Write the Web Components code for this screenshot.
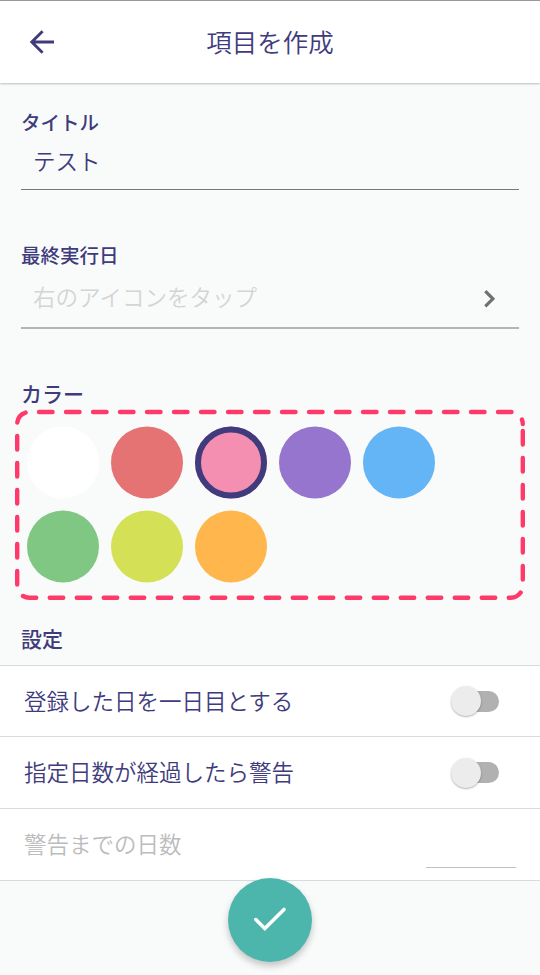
<!DOCTYPE html>
<html lang="ja">
<head>
<meta charset="utf-8">
<title>項目を作成</title>
<style>
    :root {
        --primary-color: #403b7c;
        --background-color: #f9fbfa;
        --surface-color: #ffffff;
        --divider-color: #d8dadb;
        --accent-color: #4db6ac;
        --frame-color: #ff3a6a;
    }

    body {
        margin: 0;
        background-color: var( --background-color );
        color: var( --primary-color );
        font-family: "Noto Sans CJK JP", sans-serif;
        font-weight: 350;
        overflow: hidden;
    }
</style>
</head>
<body>
<item-form-page></item-form-page>

<script>
function define( name, html ) {
    const template = document.createElement('template');
    template.innerHTML = html;

    window.customElements.define( name, class extends HTMLElement {
        constructor(){
            super();

            this.attachShadow( { mode:"open" } );
            this.shadowRoot.appendChild( template.content.cloneNode( true ) );
        }
    } );
}

define( 'app-header', `
    <style>
        :host {
            display: grid;
            grid-template-columns: 84px 1fr 84px;
            align-items: center;
            box-sizing: border-box;
            height: 83px;
            border-top: 1px solid #999999;
            background-color: var( --surface-color );
            box-shadow: 0 1px 2px rgba(0, 0, 0, .25);
        }

        svg {
            display: block;
            justify-self: center;
        }

        .title {
            padding-bottom: 2px;
            text-align: center;
            font-size: 25.5px;
            line-height: 36px;
        }
    </style>
    <svg width="28" height="28" viewBox="0 0 28 28" fill="none" stroke="currentColor" stroke-width="2.9">
        <path d="M26 14H3.5M14.6 3.2L3.8 14l10.8 10.8"/>
    </svg>
    <div class="title"><slot></slot></div>
` );

define( 'section-label', `
    <style>
        :host {
            display: block;
            height: 30px;
            line-height: var( --label-line, 30px );
            font-size: var( --label-size, 19.5px );
            font-weight: 500;
        }
    </style>
    <slot></slot>
` );

define( 'form-field', `
    <style>
        :host {
            display: flex;
            align-items: center;
            justify-content: space-between;
            box-sizing: border-box;
            padding: 0 22px 0 12px;
            font-size: 22.5px;
            line-height: 32px;
            border-bottom: 1px solid #77787a;
        }

        :host([placeholder]) {
            color: #d3d5d4;
            border-bottom: 2px solid #b2b6b4;
        }

        span {
            padding-bottom: 7px;
        }

        :host([placeholder]) span {
            padding-bottom: 5px;
        }
    </style>
    <span><slot></slot></span>
    <slot name="icon"></slot>
` );

define( 'chevron-icon', `
    <style>
        :host {
            display: block;
            width: 16px;
            height: 20px;
            color: #707070;
        }

        svg {
            display: block;
        }
    </style>
    <svg width="16" height="20" viewBox="0 0 16 20" fill="none" stroke="currentColor" stroke-width="3.2">
        <path d="M4.3 2.2l7.6 7.6-7.6 7.6"/>
    </svg>
` );

// the dashed line starts on the right side and runs clockwise
define( 'dashed-frame', `
    <style>
        :host {
            display: block;
            position: relative;
            box-sizing: border-box;
            width: 510px;
            height: 191px;
            padding: 17.5px 12px;
        }

        svg {
            position: absolute;
            left: 0;
            top: 0;
        }
    </style>
    <svg width="510" height="191" viewBox="15 409 510 191" fill="none" stroke="var( --frame-color )"
        stroke-width="4.4" stroke-linecap="round" stroke-dasharray="13.5 13.5">
        <path d="M522.8 431V585.7A12 12 0 0 1 510.8 597.7H29.2A12 12 0 0 1 17.2 585.7V424A12 12 0 0 1 29.2 412H510.8A12 12 0 0 1 522.8 424"/>
    </svg>
    <slot></slot>
` );

define( 'color-palette', `
    <style>
        :host {
            display: grid;
            grid-template-columns: repeat(5, 72px);
            gap: 12px;
        }
    </style>
    <slot></slot>
` );

// drawn as a circle so that its edge can sit between two pixels
define( 'color-swatch', `
    <style>
        :host {
            display: block;
            height: 72px;
        }

        svg {
            display: block;
        }

        .disc {
            fill: var( --swatch );
        }

        .ring {
            display: none;
            fill: none;
            stroke: var( --primary-color );
            stroke-width: 6px;
        }

        :host([selected]) .ring {
            display: inline;
        }
    </style>
    <svg width="72" height="72" viewBox="0 0.5 72 72" overflow="visible">
        <circle class="disc" cx="36" cy="36" r="36"/>
        <circle class="ring" cx="36" cy="36" r="33"/>
    </svg>
` );

define( 'setting-row', `
    <style>
        :host {
            display: flex;
            align-items: center;
            justify-content: space-between;
            box-sizing: border-box;
            height: 72px;
            padding: 0 24px;
            font-size: 22.5px;
            line-height: 32px;
            background-color: var( --surface-color );
            border-bottom: 1px solid var( --divider-color );
        }

        :host([disabled]) {
            color: #bcbcbc;
        }

        span {
            padding-bottom: 3px;
        }
    </style>
    <span><slot></slot></span>
    <slot name="control"></slot>
` );

define( 'toggle-switch', `
    <style>
        :host {
            display: flex;
            align-items: center;
            height: 34px;
            margin-right: 17px;
        }

        .track {
            display: flex;
            align-items: center;
            width: 41px;
            height: 21px;
            border-radius: 11px;
            background-color: #b1b1b1;
        }

        .thumb {
            flex: none;
            width: 30px;
            height: 30px;
            margin-left: -7px;
            border-radius: 50%;
            background-color: #ececec;
            box-shadow: 0 1px 2px rgba(0, 0, 0, .3);
        }
    </style>
    <div class="track"><div class="thumb"></div></div>
` );

define( 'number-input', `
    <style>
        :host {
            display: block;
            align-self: flex-end;
            width: 90px;
            height: 40px;
            margin: 0 0 12px;
            border-bottom: 1px solid #c0c0c0;
            box-sizing: border-box;
        }
    </style>
` );

define( 'confirm-button', `
    <style>
        :host {
            display: flex;
            align-items: center;
            justify-content: center;
            width: 84px;
            height: 84px;
            border-radius: 50%;
            background-color: var( --accent-color );
            box-shadow: 0 4px 7px rgba(0, 0, 0, .22);
        }
    </style>
    <svg width="40" height="32" viewBox="0 0 40 32" fill="none" stroke="#ffffff" stroke-width="3.5" stroke-linecap="round">
        <path d="M5.8 15.6l9 9L34 5.4"/>
    </svg>
` );

define( 'item-form-page', `
    <style>
        :host {
            display: flex;
            flex-direction: column;
            width: 540px;
            height: 975px;
        }

        .fields {
            display: flex;
            flex-direction: column;
            padding: 24px 21px 0;
        }

        .title-field {
            height: 53px;
        }

        .date-label {
            margin-top: 50px;
        }

        .date-field {
            height: 59px;
        }

        .color-label {
            margin-top: 50px;
            --label-size: 21px;
            --label-line: 28px;
        }

        dashed-frame {
            margin: 0 0 0 15px;
        }

        .settings-label {
            margin: 24px 21px 11px;
            --label-size: 21px;
            --label-line: 28px;
        }

        .settings {
            border-top: 1px solid var( --divider-color );
        }

        .first {
            height: 71px;
        }

        confirm-button {
            position: absolute;
            left: 228px;
            top: 878px;
        }
    </style>
    <app-header>項目を作成</app-header>
    <div class="fields">
        <section-label>タイトル</section-label>
        <form-field class="title-field">テスト</form-field>
        <section-label class="date-label">最終実行日</section-label>
        <form-field class="date-field" placeholder>
            右のアイコンをタップ
            <chevron-icon slot="icon"></chevron-icon>
        </form-field>
        <section-label class="color-label">カラー</section-label>
    </div>
    <dashed-frame>
        <color-palette>
            <color-swatch style="--swatch: #ffffff"></color-swatch>
            <color-swatch style="--swatch: #e57373"></color-swatch>
            <color-swatch style="--swatch: #f48fb1" selected></color-swatch>
            <color-swatch style="--swatch: #9575cd"></color-swatch>
            <color-swatch style="--swatch: #64b5f6"></color-swatch>
            <color-swatch style="--swatch: #81c784"></color-swatch>
            <color-swatch style="--swatch: #d4e157"></color-swatch>
            <color-swatch style="--swatch: #ffb74d"></color-swatch>
        </color-palette>
    </dashed-frame>
    <section-label class="settings-label">設定</section-label>
    <div class="settings">
        <setting-row class="first">
            登録した日を一日目とする
            <toggle-switch slot="control"></toggle-switch>
        </setting-row>
        <setting-row>
            指定日数が経過したら警告
            <toggle-switch slot="control"></toggle-switch>
        </setting-row>
        <setting-row disabled>
            警告までの日数
            <number-input slot="control"></number-input>
        </setting-row>
    </div>
    <confirm-button></confirm-button>
` );
</script>
</body>
</html>
